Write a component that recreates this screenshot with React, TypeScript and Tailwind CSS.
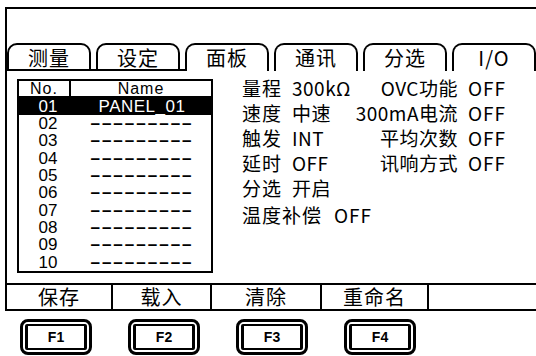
import { Fragment } from "react";

const cjk = "font-['Noto_Sans_CJK_SC',sans-serif]";
const arial = "font-['Liberation_Sans',Arial,sans-serif]";

const tabs = ["测量", "设定", "面板", "通讯", "分选", "I/O"];
const active = 2;

const softkeys = [
  { label: "保存", w: "w-[106px]" },
  { label: "载入", w: "w-[99px]" },
  { label: "清除", w: "w-[110px]" },
  { label: "重命名", w: "w-[107px]" },
];

const dash = "–––––––––";

function SettingRow({ label, value, right, end }: { label: string; value: string; right?: string; end?: string }) {
  return (
    <div className="flex h-[25px] items-center">
      <span className="w-[50px] tracking-[1px]">{label}</span>
      <div className="flex w-[166px] justify-between">
        <span className="tracking-[0.5px]">{value}</span>
        {right && <span className="tracking-[0.5px]">{right}</span>}
      </div>
      {end && <span className="ml-[10px] tracking-[1px]">{end}</span>}
    </div>
  );
}

function FKey({ label }: { label: string }) {
  return (
    <div className="h-[36px] w-[72px] rounded-[8px] border-[3px] border-black p-[2px]">
      <div className="flex h-full items-center justify-center rounded-[2px] border-2 border-x-[3px] border-black">
        <span className={`${arial} text-[14px] font-bold leading-none`}>{label}</span>
      </div>
    </div>
  );
}

export default function App() {
  return (
    <div className="h-[356px] w-[536px] overflow-hidden bg-white text-black">
      {/* screen frame */}
      <div className="ml-[5px] mt-[7px] flex flex-col border-l-2 border-t-2 border-black">
        <div className="h-[34px]" />

        {/* tabs */}
        <div className="flex h-[28px]">
          {tabs.map((t, i) => (
            <Fragment key={t}>
              {i > 0 && <div className={i <= active ? "w-[5px] border-b-2 border-black" : "w-[5px]"} />}
              <div
                className={
                  i < active
                    ? "flex w-[84px] items-center justify-center rounded-t-[10px] border-2 border-black pt-[2px]"
                    : "flex w-[84px] items-center justify-center rounded-t-[10px] border-2 border-b-0 border-black"
                }
              >
                <span className={`${cjk} text-[20px] leading-none tracking-[1px]`}>{t}</span>
              </div>
            </Fragment>
          ))}
        </div>

        {/* content */}
        <div className="flex h-[212px]">
          <div className={`${arial} ml-[10px] mt-[8px] flex h-[194px] w-[196px] flex-col border-2 border-black text-[17px] leading-none`}>
            <div className="flex h-[17px] border-b-2 border-black text-[16px]">
              <div className="flex w-[52px] items-center justify-center border-r-2 border-black tracking-[1px]">No.</div>
              <div className="flex flex-1 items-center justify-center tracking-[1px]">Name</div>
            </div>
            <div className="flex h-[17px] items-center bg-black pb-[1px] text-white">
              <span className="w-[58px] text-center">01</span>
              <span className="flex-1 pr-[4px] text-center tracking-[0.5px]">PANEL_01</span>
            </div>
            <div className="flex flex-1 flex-col">
              {["02", "03", "04", "05", "06", "07", "08", "09", "10"].map((n) => (
                <div key={n} className="flex flex-1 items-center">
                  <span className="w-[58px] text-center">{n}</span>
                  <span className="flex-1 pr-[4px] text-center font-bold tracking-[2px]">{dash}</span>
                </div>
              ))}
            </div>
          </div>

          <div className={`${cjk} ml-[29px] mt-[4px] text-[19px] leading-none`}>
            <SettingRow label="量程" value="300kΩ" right="OVC功能" end="OFF" />
            <SettingRow label="速度" value="中速" right="300mA电流" end="OFF" />
            <SettingRow label="触发" value="INT" right="平均次数" end="OFF" />
            <SettingRow label="延时" value="OFF" right="讯响方式" end="OFF" />
            <SettingRow label="分选" value="开启" />
            <div className="mt-[2px] flex h-[25px] items-center gap-[12px]">
              <span className="tracking-[1px]">温度补偿</span>
              <span className="tracking-[1px]">OFF</span>
            </div>
          </div>
        </div>

        {/* soft keys */}
        <div className={`${cjk} flex h-[28px] border-y-2 border-black text-[20px] leading-none`}>
          {softkeys.map((k) => (
            <div key={k.label} className={`${k.w} flex items-center justify-center border-r-2 border-black tracking-[1px]`}>
              {k.label}
            </div>
          ))}
          <div className="flex-1" />
        </div>
      </div>

      {/* function keys */}
      <div className="ml-[20px] mt-[8px] flex gap-[36px]">
        <FKey label="F1" />
        <FKey label="F2" />
        <FKey label="F3" />
        <FKey label="F4" />
      </div>
    </div>
  );
}
